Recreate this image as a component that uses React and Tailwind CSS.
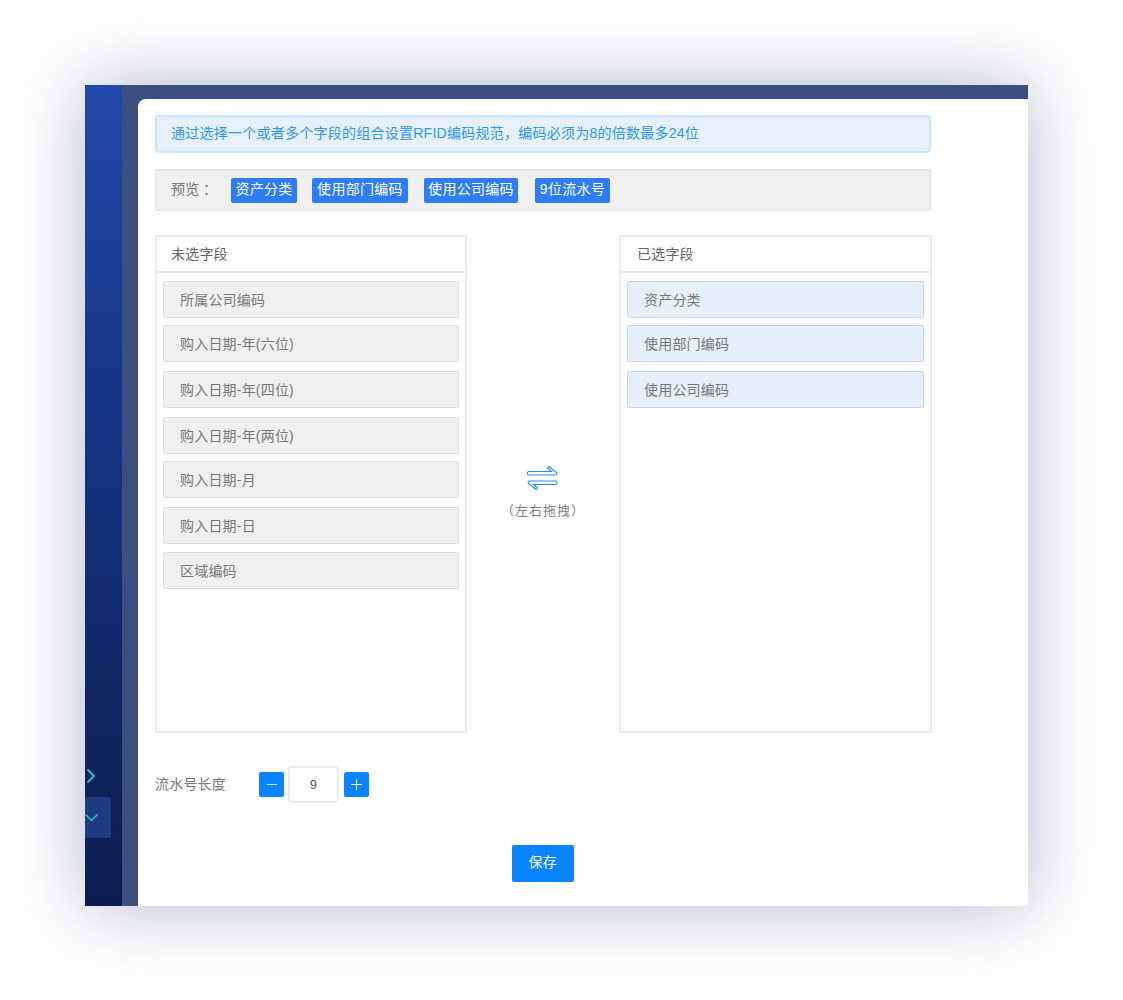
const unselected = [
  { label: '所属公司编码', gap: '' },
  { label: '购入日期-年(六位)', gap: 'mt-[7px]' },
  { label: '购入日期-年(四位)', gap: 'mt-[9px]' },
  { label: '购入日期-年(两位)', gap: 'mt-[9px]' },
  { label: '购入日期-月', gap: 'mt-[7px]' },
  { label: '购入日期-日', gap: 'mt-[9px]' },
  { label: '区域编码', gap: 'mt-[8px]' },
];

const selected = [
  { label: '资产分类', gap: '' },
  { label: '使用部门编码', gap: 'mt-[7px]' },
  { label: '使用公司编码', gap: 'mt-[9px]' },
];

const tags = [
  { label: '资产分类', size: 'w-[66px]' },
  { label: '使用部门编码', size: 'ml-[15px] w-[96px]' },
  { label: '使用公司编码', size: 'ml-[16px] w-[94px]' },
  { label: '9位流水号', size: 'ml-[17px] w-[75px]' },
];

function FieldPanel({ title, titleClass, items, itemClass, className }) {
  return (
    <div className={`h-[498px] border-2 border-[#ebebeb] bg-white ${className}`}>
      <div className={`flex h-[36px] items-center border-b-2 border-[#e6e6e6] text-[14px] tracking-[0.2px] text-[#666] ${titleClass}`}>
        {title}
      </div>
      <div className="px-[6px] pt-[8px]">
        {items.map((item) => (
          <div
            key={item.label}
            className={`flex h-[37px] items-center rounded-[2px] border pl-[16px] pt-[2px] text-[14px] tracking-[0.2px] text-[#777] ${itemClass} ${item.gap}`}
          >
            {item.label}
          </div>
        ))}
      </div>
    </div>
  );
}

function SwapIcon() {
  return (
    <svg width="32" height="26" viewBox="0 0 32 26" fill="none" stroke="#1e90ff" strokeWidth="1.1">
      <path d="M1.500 6.500H24.500L20.500 3L22 1.500L29.500 7.500Q30.500 10 28.500 10H1.500Q0.500 10 0.500 8.250Q0.500 6.500 1.500 6.500z" />
      <path d="M29 19.500H6.500L10.500 23L9 24.500L1.500 18.500Q0.500 16 2.500 16H29Q30 16 30 17.750Q30 19.500 29 19.500z" />
    </svg>
  );
}

export default function App() {
  return (
    <div
      className="h-[1000px] w-[1123px] overflow-hidden bg-white pl-[85px] pt-[85px] text-[14px]"
      style={{ fontFamily: '"Liberation Sans", "Noto Sans CJK SC", sans-serif' }}
    >
      <div className="flex h-[821px] w-[943px] overflow-hidden shadow-[0_0_70px_rgba(30,50,100,0.34)]">
        <aside className="flex w-[37px] shrink-0 flex-col bg-gradient-to-b from-[#2148aa] via-[#14307a] to-[#0c1c4e]">
          <svg className="mt-[682px] text-[#2cc5c8]" width="12" height="18" viewBox="0 0 12 18" fill="none" stroke="currentColor" strokeWidth="1.800">
            <path d="M2.500 2.500l6.500 6.500-6.500 6.500" />
          </svg>
          <div className="mt-[12px] flex h-[41px] w-[26px] items-center rounded-r-[3px] bg-[#1f3a80]">
            <svg className="text-[#2cc5c8]" width="14" height="9" viewBox="0 0 14 9" fill="none" stroke="currentColor" strokeWidth="1.500">
              <path d="M0.500 1.500l6 6 6-6" />
            </svg>
          </div>
        </aside>

        <div className="flex-1 bg-[#3c4f7f] pl-[16px] pt-[14px]">
          <main className="h-full rounded-tl-[8px] bg-white pl-[17px] pt-[16px]">
            <div className="flex h-[38px] w-[776px] items-center rounded-[4px] border-2 border-[#cde3f9] bg-[#e6f1fb] pb-[2px] pl-[14px] text-[14px] tracking-[0.25px] text-[#2f96f3]">
              通过选择一个或者多个字段的组合设置RFID编码规范，编码必须为8的倍数最多24位
            </div>

            <div className="mt-[16px] flex h-[42px] w-[776px] items-center border-2 border-[#e8e8e8] bg-[#f0f0f0] pl-[14px] text-[#777]">
              <span className="w-[60px] pb-[1px]">预览 ：</span>
              {tags.map((tag) => (
                <span
                  key={tag.label}
                  className={`flex h-[25px] items-center justify-center rounded-[2px] bg-[#2e7cf6] pb-[1px] text-[14px] tracking-[0.3px] text-white ${tag.size}`}
                >
                  {tag.label}
                </span>
              ))}
            </div>

            <div className="mt-[24px] flex w-[777px] items-start">
              <FieldPanel
                title="未选字段"
                titleClass="pl-[14px]"
                items={unselected}
                itemClass="border-[#dedede] bg-[#f0f0f0]"
                className="w-[312px]"
              />
              <div className="flex h-[498px] w-[152px] flex-col items-center pt-[230px] text-[13px] tracking-[1px] text-[#808080]">
                <SwapIcon />
                <span className="mt-[10px]">（左右拖拽）</span>
              </div>
              <FieldPanel
                title="已选字段"
                titleClass="pl-[16px]"
                items={selected}
                itemClass="border-[#bcd8f4] bg-[#e6f0fa]"
                className="w-[313px]"
              />
            </div>

            <div className="mt-[33px] flex h-[37px] items-center tracking-[0.2px] text-[#777]">
              <span className="w-[104px]">流水号长度</span>
              <button className="flex h-[25px] w-[25px] items-center justify-center rounded-[2px] bg-[#0a84ff]">
                <span className="h-px w-[10px] bg-[#cfe6ff]" />
              </button>
              <div className="ml-[4px] flex h-[37px] w-[51px] items-center justify-center rounded-[4px] border-2 border-[#ececec] text-[13px] text-[#555]">
                9
              </div>
              <button className="relative ml-[5px] flex h-[25px] w-[25px] items-center justify-center rounded-[2px] bg-[#0a84ff]">
                <span className="absolute h-px w-[11px] bg-white" />
                <span className="absolute h-[11px] w-px bg-white" />
              </button>
            </div>

            <div className="mt-[42px] flex w-[776px] justify-center">
              <button className="-ml-[1px] h-[37px] w-[62px] rounded-[2px] bg-[#0a84ff] pb-[2px] text-[14px] text-white">
                保存
              </button>
            </div>
          </main>
        </div>
      </div>
    </div>
  );
}
